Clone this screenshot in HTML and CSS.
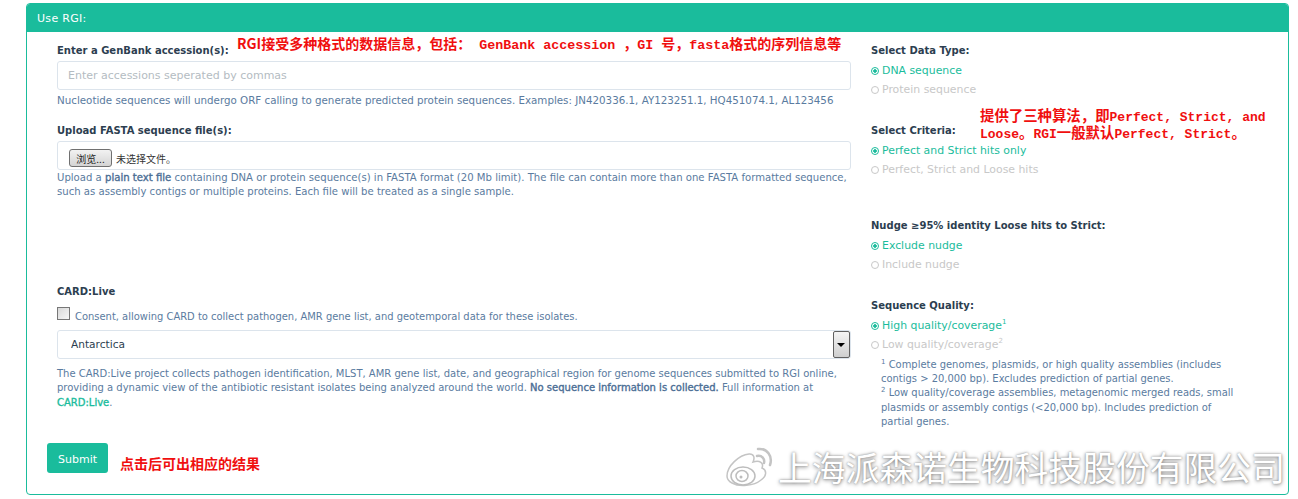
FILE: index.html
```html
<!DOCTYPE html>
<html lang="en">
<head>
    <meta charset="UTF-8">
    <title>Use RGI</title>
    <link rel="stylesheet" href="styles.css">
</head>
<body>
    <div class="panel">
        <div class="panel-heading">Use RGI:</div>
        <form class="panel-body">
            <div class="col-left">
                <div class="group group-accession">
                    <label class="field-label">Enter a GenBank accession(s):</label>
                    <input class="text-input" type="text" placeholder="Enter accessions seperated by commas">
                    <p class="help help-wide">Nucleotide sequences will undergo ORF calling to generate predicted protein sequences. Examples: JN420336.1, AY123251.1, HQ451074.1, AL123456</p>
                </div>
                <div class="group group-upload">
                    <label class="field-label">Upload FASTA sequence file(s):</label>
                    <div class="file-box">
                        <button class="file-btn" type="button">浏览...</button>
                        <span class="file-name">未选择文件。</span>
                    </div>
                    <p class="help help-tight">Upload a <strong>plain text file</strong> containing DNA or protein sequence(s) in FASTA format (20 Mb limit). The file can contain more than one FASTA formatted sequence, such as assembly contigs or multiple proteins. Each file will be treated as a single sample.</p>
                </div>
                <div class="group group-live">
                    <label class="field-label">CARD:Live</label>
                    <div class="consent">
                        <span class="checkbox"></span>
                        <span class="help-inline">Consent, allowing CARD to collect pathogen, AMR gene list, and geotemporal data for these isolates.</span>
                    </div>
                    <div class="select-wrap">
                        <select class="select-input">
                            <option>Antarctica</option>
                        </select>
                        <span class="select-arrow"></span>
                    </div>
                    <p class="help help-live">The CARD:Live project collects pathogen identification, MLST, AMR gene list, date, and geographical region for genome sequences submitted to RGI online, providing a dynamic view of the antibiotic resistant isolates being analyzed around the world. <strong>No sequence information is collected.</strong> Full information at <a class="live-link">CARD:Live</a>.</p>
                </div>
            </div>
            <div class="col-right">
                <div class="radio-group">
                    <label class="field-label">Select Data Type:</label>
                    <div class="radio on"><span class="dot"></span>DNA sequence</div>
                    <div class="radio"><span class="dot"></span>Protein sequence</div>
                </div>
                <div class="radio-group">
                    <label class="field-label">Select Criteria:</label>
                    <div class="radio on"><span class="dot"></span>Perfect and Strict hits only</div>
                    <div class="radio"><span class="dot"></span>Perfect, Strict and Loose hits</div>
                </div>
                <div class="radio-group radio-group-nudge">
                    <label class="field-label">Nudge ≥95% identity Loose hits to Strict:</label>
                    <div class="radio on"><span class="dot"></span>Exclude nudge</div>
                    <div class="radio"><span class="dot"></span>Include nudge</div>
                </div>
                <div class="radio-group">
                    <label class="field-label">Sequence Quality:</label>
                    <div class="radio on"><span class="dot"></span>High quality/coverage<sup>1</sup></div>
                    <div class="radio"><span class="dot"></span>Low quality/coverage<sup>2</sup></div>
                    <p class="notes"><sup>1</sup> Complete genomes, plasmids, or high quality assemblies (includes contigs &gt; 20,000 bp). Excludes prediction of partial genes.<br><sup>2</sup> Low quality/coverage assemblies, metagenomic merged reads, small plasmids or assembly contigs (&lt;20,000 bp). Includes prediction of partial genes.</p>
                </div>
            </div>
            <button class="submit-btn" type="button">Submit</button>
        </form>

        <!-- red notes and the watermark sit on top of the screenshot -->
        <div class="note note-formats">RGI接受多种格式的数据信息，包括：<span class="latin"> GenBank accession </span>，<span class="latin">GI </span>号，<span class="latin">fasta</span>格式的序列信息等</div>
        <div class="note note-algo">提供了三种算法，即<span class="latin">Perfect, Strict, and</span><br><span class="latin">Loose</span>。<span class="latin">RGI</span>一般默认<span class="latin">Perfect, Strict</span>。</div>
        <div class="note note-submit">点击后可出相应的结果</div>
        <div class="watermark">
            <svg class="weibo" width="52" height="44" viewBox="0 0 52 44" fill="none">
                <path d="M2 31C2 21 14 10 24 9C29 8.500 30 13 28 17C35 15 39 18 37 23C42 25 42 31 36 35C29 41 14 42 7 38C4 36.500 2 34 2 31Z" fill="#fff" stroke="#c4c4c4" stroke-width="1.500"/>
                <ellipse cx="18" cy="31" rx="12" ry="9" stroke="#bdbdbd" stroke-width="1.500"/>
                <ellipse cx="17" cy="31" rx="6" ry="5.500" stroke="#bdbdbd" stroke-width="1.500"/>
                <circle cx="16" cy="32" r="1.500" fill="#bdbdbd"/>
                <path d="M32 11C37 10 40 14 39 18M33 4C42 3 48 11 45 20" stroke="#c4c4c4" stroke-width="2.500" stroke-linecap="round"/>
            </svg>
            <span class="watermark-text">上海派森诺生物科技股份有限公司</span>
        </div>
    </div>
</body>
</html>
```

FILE: styles.css
```css
body {
    margin: 0;
    background: #fff;
    font-family: "DejaVu Sans", Verdana, sans-serif;
    font-size: 10px;
    color: #2c3e50;
}
.panel {
    position: relative;
    box-sizing: border-box;
    width: 1263px;
    height: 492px;
    margin: 3px 0 0 26px;
    border: 1px solid #1abc9c;
    border-radius: 4px;
    overflow: hidden;
}
.panel-heading {
    height: 29px;
    margin: -1px -1px 0;
    padding: 0 11px;
    background: #1abc9c;
    color: #fff;
    font-size: 11px;
    letter-spacing: 0.3px;
    line-height: 31px;
}
.panel-body {
    position: relative;
    display: grid;
    grid-template-columns: 794px 1fr;
    column-gap: 20px;
    padding: 0 0 0 30px;
}
.field-label {
    display: block;
    font-weight: bold;
    font-size: 10px;
    line-height: 14px;
    color: #2c3e50;
}

/* left column */
.group-accession {
    padding-top: 12px;
}
.group-upload {
    padding-top: 16px;
}
.group-live {
    padding-top: 85px;
}
.text-input {
    display: block;
    box-sizing: border-box;
    width: 100%;
    height: 29px;
    margin-top: 3px;
    padding: 0 10px;
    border: 1px solid #dce4ec;
    border-radius: 3px;
    font-family: inherit;
    font-size: 11px;
}
.text-input::placeholder {
    color: #b4bcc2;
}
.help {
    margin: 3px 0 0;
    font-size: 10px;
    line-height: 14.500px;
    color: #5a7ba0;
}
.help-wide {
    font-size: 10.300px;
}
.help-tight {
    margin-top: 1px;
    font-size: 10.100px;
}
.help-live {
    margin-top: 8px;
}
/* the bold here is a smeared regular weight, not a real bold face */
.help strong {
    font-weight: normal;
    color: #4a6d94;
    -webkit-text-stroke: 0.35px #4a6d94;
}
.file-box {
    display: flex;
    align-items: center;
    box-sizing: border-box;
    height: 29px;
    margin-top: 3px;
    padding: 6px 0 0 11px;
    border: 1px solid #dce4ec;
    border-radius: 3px;
}
.file-btn {
    width: 43px;
    height: 18px;
    padding: 0;
    border: 1px solid #707070;
    border-radius: 3px;
    background: linear-gradient(#f2f2f2, #d4d4d4);
    font-family: "Noto Sans CJK SC", sans-serif;
    font-size: 10px;
    color: #222;
}
.file-name {
    margin-left: 4px;
    font-family: "Noto Sans CJK SC", sans-serif;
    font-size: 10px;
    color: #333;
}
.consent {
    display: flex;
    align-items: flex-end;
    height: 18px;
    margin-top: 7px;
}
.checkbox {
    box-sizing: border-box;
    width: 13px;
    height: 13px;
    margin-bottom: 4px;
    border: 1px solid #777;
    background: linear-gradient(135deg, #d8d8d8, #f6f6f6);
}
.help-inline {
    margin-left: 5px;
    font-size: 9.950px;
    line-height: 14px;
    color: #5a7ba0;
}
.select-wrap {
    position: relative;
    margin-top: 6px;
}
.select-input {
    display: block;
    box-sizing: border-box;
    width: 100%;
    height: 29px;
    padding: 0 13px;
    border: 1px solid #dce4ec;
    border-radius: 3px;
    background: #fff;
    appearance: none;
    font-family: inherit;
    font-size: 10.600px;
    color: #2c3e50;
}
.select-arrow {
    position: absolute;
    top: 1px;
    right: 1px;
    box-sizing: border-box;
    width: 17px;
    height: 27px;
    border: 1px solid #606060;
    border-radius: 2px;
    background: linear-gradient(#f4f4f4, #cfcfcf);
}
.select-arrow::after {
    content: "";
    position: absolute;
    top: 11px;
    left: 3px;
    border: 4px solid transparent;
    border-top: 4px solid #000;
}
.live-link {
    color: #1abc9c;
    -webkit-text-stroke: 0.35px #1abc9c;
}

/* right column */
.col-right {
    padding-top: 12px;
}
.radio-group {
    height: 80px;
}
.radio-group-nudge {
    margin-top: 15px;
}
.radio {
    display: flex;
    align-items: center;
    height: 19px;
    font-size: 10.900px;
    color: #c8c8c8;
}
.radio.on {
    margin-top: 3px;
    color: #1abc9c;
}
.dot {
    box-sizing: border-box;
    width: 8px;
    height: 8px;
    margin-right: 3px;
    border: 1.500px solid #c8c8c8;
    border-radius: 50%;
}
.radio.on .dot {
    border-color: #1abc9c;
    background: radial-gradient(circle, #1abc9c 0 1.500px, #fff 2px);
}
.radio sup {
    align-self: flex-start;
    font-size: 7px;
    line-height: 12px;
}
.notes {
    width: 360px;
    margin: 4px 0 0;
    padding-left: 10px;
    font-size: 9.950px;
    line-height: 14.200px;
    color: #5a7ba0;
}
.notes sup {
    font-size: 7px;
    line-height: 0;
}
.submit-btn {
    position: absolute;
    top: 411px;
    left: 20px;
    width: 61px;
    height: 30px;
    padding-top: 3px;
    border: 0;
    border-radius: 3px;
    background: #1abc9c;
    color: #fff;
    font-family: inherit;
    font-size: 11px;
}

/* overlays */
.note {
    position: absolute;
    font-family: "Noto Sans CJK SC", sans-serif;
    font-weight: bold;
    font-size: 14px;
    line-height: 17px;
    color: #f00f0f;
    white-space: pre;
}
.latin {
    font-family: "Liberation Mono", monospace;
    font-size: 13.330px;
    line-height: 1;
}
.note-formats {
    top: 31px;
    left: 210px;
}
.note-algo {
    top: 103px;
    left: 953px;
    font-size: 14.400px;
    line-height: 15px;
}
.note-algo .latin {
    font-size: 13px;
}
.note-submit {
    top: 451px;
    left: 93px;
}
.watermark {
    position: absolute;
    top: 441px;
    left: 698px;
    display: flex;
    align-items: center;
}
.weibo {
    margin-right: 1px;
}
.watermark-text {
    font-family: "Noto Sans CJK SC", sans-serif;
    font-size: 33.800px;
    line-height: 44px;
    color: #fff;
    text-shadow: 0 1px 4px #808080, 0 0 2px #9a9a9a;
    white-space: nowrap;
}
```
